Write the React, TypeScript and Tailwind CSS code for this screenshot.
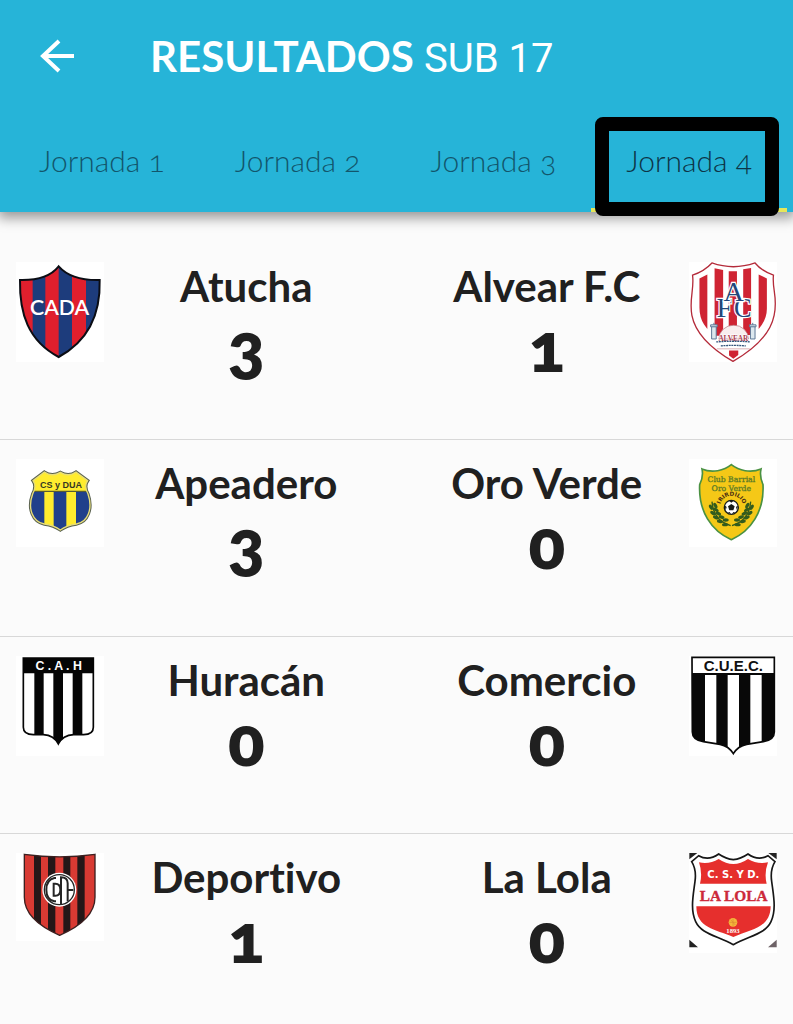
import type { ReactNode } from "react";

type CrestProps = { label: string; viewBox: string; tall?: boolean; children: ReactNode };

function Crest({ label, viewBox, tall = false, children }: CrestProps) {
  return (
    <svg
      role="img"
      aria-label={label}
      viewBox={viewBox}
      className={tall ? "h-[100px] w-[88px] shrink-0 bg-white" : "h-[88px] w-[88px] shrink-0 bg-white"}
    >
      {children}
    </svg>
  );
}

function AtuchaCrest() {
  const d = "M160 49 Q126 92 44 90 C42 190 68 272 160 321 C250 272 286 190 283 90 Q198 92 160 49Z";
  return (
    <Crest label="Escudo Atucha" viewBox="32 36 264 300" tall>
      <clipPath id="atucha"><path d={d} /></clipPath>
      <g clipPath="url(#atucha)">
        <path fill="#e01f2d" d="M30 36h264v300H30z" />
        <path fill="#1d3c7c" d="M82 36h38v300H82zM160 36h40v300h-40zM242 36h50v300h-50z" />
      </g>
      <path d={d} fill="none" stroke="#0b0d14" strokeWidth="6" />
      <text x="163" y="194" textAnchor="middle" fontFamily="Lato, sans-serif" fontWeight="600" fontSize="64" fill="#fff">CADA</text>
    </Crest>
  );
}

function AlvearCrest() {
  const d = "M95 41 Q160 64 226 41 Q244 64 282 78 C277 120 296 145 284 200 C272 260 215 308 159 340 C104 308 46 262 34 200 C25 150 42 120 36 78 Q72 66 95 41Z";
  return (
    <Crest label="Escudo Alvear F.C" viewBox="27 38 264 304" tall>
      <path d={d} fill="#fff" stroke="#b42b3a" strokeWidth="4" />
      <path fill="#cf2433" d="M81 76v166l-10-14q-14-22-14-52V88zM103 57l26 5v200h-26zM146 66h25v210h-25zM190 60l24-4v204h-24zM237 76l25 12v92q0 32-25 62zM147 307h28v14l-15 11-13-10z" />
      <g fontFamily="Liberation Serif, serif" fontWeight="400" fill="#22477a" stroke="#fff" strokeWidth="7" paintOrder="stroke" textAnchor="middle">
        <text x="133" y="204" fontSize="86">F</text>
        <text x="189" y="204" fontSize="80">C</text>
        <text x="161" y="156" fontSize="86">A</text>
      </g>
      <path d="M116 272a45 42 0 0 1 90 0z" fill="#f8eeee" stroke="#b46e77" strokeWidth="2" />
      <g fill="#dce8ee" stroke="#5b7795" strokeWidth="3">
        <path d="M94 234h14v38H94zM212 234h14v38h-14z" />
        <path d="M91 229h20v6H91zM209 229h20v6h-20zM101 223v6M219 223v6" />
      </g>
      <text x="160" y="277" textAnchor="middle" fontFamily="Liberation Serif, serif" fontWeight="700" fontSize="22" fill="#a83c4f" stroke="#fff" strokeWidth="3" paintOrder="stroke">ALVEAR</text>
      <path d="M108 281q52-4 104 0M122 293q38-3 76 0" fill="none" stroke="#35577e" strokeWidth="4" strokeDasharray="6 2" />
      <path d="M110 302h100" stroke="#c98991" strokeWidth="2" />
    </Crest>
  );
}

function ApeaderoCrest() {
  const d = "M117 68 Q140 84 165 69 Q190 84 212 68 L247 94 Q235 110 248 134 C263 178 248 218 213 224 Q184 228 165 242 Q146 228 117 224 C82 218 66 178 82 134 Q95 110 83 94Z";
  return (
    <Crest label="Escudo Apeadero" viewBox="32 29 264 264">
      <clipPath id="apeadero"><path d={d} /></clipPath>
      <path d={d} fill="#e9dc55" stroke="#58604f" strokeWidth="10" />
      <g clipPath="url(#apeadero)">
        <path fill="#20408b" d="M65 127h200v120H65z" />
        <path fill="#ffec2e" d="M60 60h210v65H60zM117 125h28v120h-28zM183 125h29v120h-29z" />
        <path d="M75 126h180" stroke="#575c32" strokeWidth="4" />
      </g>
      <path d={d} fill="none" stroke="#e8de78" strokeWidth="4" />
      <text x="167" y="117" textAnchor="middle" fontFamily="Liberation Sans, sans-serif" fontWeight="700" fontSize="27" fill="#343724">CS y DUA</text>
    </Crest>
  );
}

function OroVerdeCrest() {
  const leaves = [[100, 170, 60], [104, 185, 35], [112, 197, 25], [123, 208, 15], [137, 217, 0]];
  return (
    <Crest label="Escudo Oro Verde" viewBox="27 27 264 264">
      <path d="M154 44 C132 62 96 70 66 57 Q71 80 59 104 C55 184 94 243 154 269 C213 243 253 184 249 104 Q238 80 243 57 C212 70 177 62 154 44Z" fill="#f5c817" stroke="#4a9142" strokeWidth="5" />
      <g fontFamily="DejaVu Serif, serif" fontSize="23" fill="#5f7d26" stroke="#5f7d26" strokeWidth="1" textAnchor="middle">
        <text x="154" y="96">Club Barrial</text>
        <text x="154" y="122">Oro Verde</text>
      </g>
      <path id="arc" d="M121 163 A35 34 0 0 1 189 163" fill="none" />
      <text fontFamily="DejaVu Sans, sans-serif" fontWeight="700" fontSize="17" fill="#4a2f14">
        <textPath href="#arc" startOffset="50%" textAnchor="middle">IRIRDILIO</textPath>
      </text>
      <circle cx="154" cy="172" r="21" fill="#fff" stroke="#161b18" strokeWidth="4" />
      <path d="M154 162l10 7-4 12h-12l-4-12zM147 152h14l-7 6zM134 166l6 5-3 10zM174 166l-6 5 3 10zM143 188l6-2 4 6zM166 188l-6-2-4 6z" fill="#161b18" />
      {[false, true].map((flip) => (
        <g key={String(flip)} transform={flip ? "translate(308 0) scale(-1 1)" : undefined} fill="#325b1d">
          <path d="M96 155q4 56 56 72" fill="none" stroke="#325b1d" strokeWidth="4" />
          {leaves.map(([x, y, a]) => (
            <g key={x} transform={`translate(${x} ${y}) rotate(${a})`}>
              <ellipse cx="0" cy="-7" rx="9" ry="5" />
              <ellipse cx="-2" cy="7" rx="9" ry="5" />
            </g>
          ))}
        </g>
      ))}
    </Crest>
  );
}

function HuracanCrest() {
  const d = "M54 40H264V248Q264 270 235 270H205Q172 272 159 298Q146 272 114 270H84Q54 270 54 248Z";
  return (
    <Crest label="Escudo Huracán" viewBox="32 34 264 300" tall>
      <clipPath id="huracan"><path d={d} /></clipPath>
      <g clipPath="url(#huracan)">
        <path fill="#fff" d="M50 36h220v270H50z" />
        <path fill="#050505" d="M50 36h220v50H50zM87 86h28v214H87zM144 86h29v220h-29zM202 86h29v214h-29z" />
      </g>
      <path d={d} fill="none" stroke="#050505" strokeWidth="5" />
      <text x="160" y="77" textAnchor="middle" fontFamily="Liberation Sans, sans-serif" fontWeight="700" fontSize="37" fill="#fff">C . A . H</text>
    </Crest>
  );
}

function ComercioCrest() {
  const d = "M36 38H283V262Q283 286 250 291L200 299Q174 304 160 327Q146 304 120 299L70 291Q37 286 37 262Z";
  return (
    <Crest label="Escudo Comercio" viewBox="27 34 264 300" tall>
      <clipPath id="comercio"><path d={d} /></clipPath>
      <g clipPath="url(#comercio)">
        <path fill="#fff" d="M30 33h260v300H30z" />
        <path fill="#080808" d="M30 88h45v215H30zM109 88h34v222h-34zM177 88h34v222h-34zM245 88h45v215h-45zM30 85h260v6H30z" />
      </g>
      <path d={d} fill="none" stroke="#080808" strokeWidth="5" />
      <text x="160" y="79" textAnchor="middle" fontFamily="Liberation Sans, sans-serif" fontWeight="700" fontSize="45" fill="#111">C.U.E.C.</text>
    </Crest>
  );
}

function DeportivoCrest() {
  const d = "M57 43Q163 58 269 43V172Q269 240 163 286Q57 240 57 172Z";
  return (
    <Crest label="Escudo Deportivo" viewBox="32 39 264 264">
      <clipPath id="deportivo"><path d={d} /></clipPath>
      <g clipPath="url(#deportivo)">
        <path fill="#d83a33" d="M50 36h225v255H50z" />
        <path fill="#241718" d="M86 36h21v255H86zM128 36h22v255h-22zM174 36h21v255h-21zM216 36h22v255h-22z" />
      </g>
      <path d={d} fill="none" stroke="#3c2020" strokeWidth="4" />
      <circle cx="162" cy="149" r="51" fill="#fff" />
      <circle cx="162" cy="149" r="45" fill="none" stroke="#252525" strokeWidth="4" />
      <path d="M152 114H147Q123 119 123 149T147 184H152M145 131V167M142 131H150Q165 131 165 149T150 167H142M167 194V112Q187 112 187 130V184M187 150H204" fill="none" stroke="#252525" strokeWidth="6" />
    </Crest>
  );
}

function LaLolaCrest() {
  return (
    <Crest label="Escudo La Lola" viewBox="27 40 264 300" tall>
      <path fill="#222" d="M28 40h24L28 59zM265 40h25v19zM28 300l26 23H28z" />
      <path fill="#6d6266" d="M290 300v23h-26z" />
      <path d="M116 43Q138 58 160 60Q182 58 204 43Q235 65 264 48L285 66Q270 90 275 125C280 165 290 210 273 246C257 281 216 286 160 315C104 286 63 281 47 246C30 210 40 165 45 125Q50 90 35 66L56 48Q85 65 116 43Z" fill="#fff" stroke="#171717" strokeWidth="5" />
      <path d="M57 68Q88 75 116 58Q138 73 160 73Q182 73 204 58Q232 75 264 68Q252 100 260 132H60Q68 100 57 68ZM49 200H272C271 265 215 269 160 292C105 269 49 265 49 200Z" fill="#e62f2d" />
      <text x="160" y="114" textAnchor="middle" fontFamily="DejaVu Sans, sans-serif" fontWeight="700" fontSize="30" fill="#fff">C. S. Y D.</text>
      <text x="161" y="183" textAnchor="middle" fontFamily="Liberation Serif, serif" fontWeight="700" fontSize="46" fill="#cc2a3b" stroke="#cc2a3b" strokeWidth="1">LA LOLA</text>
      <circle cx="159" cy="248" r="13" fill="#f4b63a" />
      <path d="M159 237v22M148 248h22M152 240l14 16" stroke="#dd8830" strokeWidth="2" />
      <text x="159" y="281" textAnchor="middle" fontFamily="Liberation Serif, serif" fontWeight="700" fontSize="20" fill="#fff">1893</text>
    </Crest>
  );
}

type Side = { name: string; score: number; crest: ReactNode };

const matches: { home: Side; away: Side }[] = [
  {
    home: { name: "Atucha", score: 3, crest: <AtuchaCrest /> },
    away: { name: "Alvear F.C", score: 1, crest: <AlvearCrest /> },
  },
  {
    home: { name: "Apeadero", score: 3, crest: <ApeaderoCrest /> },
    away: { name: "Oro Verde", score: 0, crest: <OroVerdeCrest /> },
  },
  {
    home: { name: "Huracán", score: 0, crest: <HuracanCrest /> },
    away: { name: "Comercio", score: 0, crest: <ComercioCrest /> },
  },
  {
    home: { name: "Deportivo", score: 1, crest: <DeportivoCrest /> },
    away: { name: "La Lola", score: 0, crest: <LaLolaCrest /> },
  },
];

const rounds = ["Jornada 1", "Jornada 2", "Jornada 3", "Jornada 4"];

function Team({ name, score }: { name: string; score: number }) {
  return (
    <div className="flex flex-col items-center whitespace-nowrap">
      <h2 className="text-[42px] leading-[48px] font-bold [font-variant-ligatures:none]">{name}</h2>
      <p className="text-[68px] leading-[72px] font-extrabold oldstyle-nums">{score}</p>
    </div>
  );
}

export default function App() {
  return (
    <div className="min-h-screen overflow-hidden bg-[#fbfbfb] font-['Lato',sans-serif] text-[#202020]">
      <header className="relative bg-[#26b4d8] shadow-[0_4px_12px_2px_rgba(0,0,0,0.4)]">
        <div className="flex h-28 items-center gap-[70px] pt-0.5 pl-[36px] text-white">
          <button type="button" aria-label="Volver" className="shrink-0">
            <svg viewBox="0 0 44 44" className="h-11 w-11" fill="none" stroke="currentColor" strokeWidth="4">
              <path d="M38 21H8M23 6L7 21L23 36" />
            </svg>
          </button>
          <h1 className="text-[42px] leading-[48px] font-bold whitespace-nowrap">
            RESULTADOS <span className="font-['Roboto',sans-serif] text-[40px] font-normal">SUB 17</span>
          </h1>
        </div>
        <nav aria-label="Jornadas" className="grid h-[100px] grid-cols-4 pr-1.5 pl-1">
          {rounds.map((round, i) => {
            const active = i === rounds.length - 1;
            return (
              <a
                key={round}
                href={`#jornada-${i + 1}`}
                aria-current={active ? "page" : undefined}
                className={
                  active
                    ? "relative flex items-center justify-center border-b-4 border-[#e6e65a] text-[30px] font-light whitespace-nowrap text-[#0d3447] oldstyle-nums"
                    : "flex items-center justify-center border-b-4 border-transparent text-[30px] font-light whitespace-nowrap text-[#12566c] oldstyle-nums"
                }
              >
                {round}
                {active && (
                  <span className="absolute top-[5px] right-2 -bottom-2 left-1 rounded-lg border-[14px] border-black" />
                )}
              </a>
            );
          })}
        </nav>
      </header>
      <main className="pt-[31px]">
        <ul>
          {matches.map(({ home, away }) => (
            <li key={home.name} className="flex h-[197px] items-start border-b border-[#d8d8d8] px-4 pt-[19px] last:border-b-0">
              {home.crest}
              <div className="grid flex-1 grid-cols-2 gap-4">
                <Team name={home.name} score={home.score} />
                <Team name={away.name} score={away.score} />
              </div>
              {away.crest}
            </li>
          ))}
        </ul>
      </main>
    </div>
  );
}
